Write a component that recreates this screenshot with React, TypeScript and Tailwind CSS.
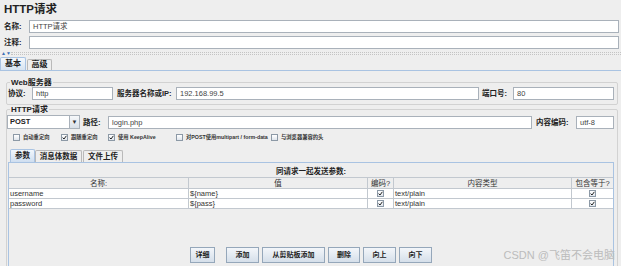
import type { ReactNode } from "react";

const input =
  "h-[13px] border border-[#a9b1ba] bg-white pl-[3px] text-[7.5px] leading-[11px] text-[#444] whitespace-nowrap overflow-hidden";
const label = "text-[7.5px] font-bold leading-[13px] text-[#222] whitespace-nowrap";

function Check({ on }: { on: boolean }) {
  return (
    <span className="flex h-[7px] w-[7px] shrink-0 items-center justify-center border border-[#8c99a6] bg-gradient-to-b from-white to-[#dfe5ec]">
      {on && (
        <svg width="5" height="5" viewBox="0 0 5 5">
          <path d="M0.6 2.6 L2 4 L4.4 0.8" fill="none" stroke="#222" strokeWidth="1" />
        </svg>
      )}
    </span>
  );
}

function Opt({ on, text, w }: { on: boolean; text: string; w: string }) {
  return (
    <div className={`flex items-center gap-[3px] ${w}`}>
      <Check on={on} />
      <span className="text-[5.3px] font-bold leading-[7px] text-[#333] whitespace-nowrap">{text}</span>
    </div>
  );
}

function Group({ title, children, className = "" }: { title: string; children: ReactNode; className?: string }) {
  return (
    <fieldset className={`ml-[6px] mr-[3px] rounded-[2px] border border-[#d2d2d2] ${className}`}>
      <legend className="ml-[3px] px-[1px] text-[8px] font-bold leading-[9px] text-[#222]">{title}</legend>
      {children}
    </fieldset>
  );
}

const rows = [
  { name: "username", value: "${name}" },
  { name: "password", value: "${pass}" },
];

const buttons = ["添加", "从剪贴板添加", "删除", "向上", "向下"];

export default function App() {
  return (
    <div className="relative h-[266px] w-[621px] overflow-hidden bg-[#eeeeee] font-[family-name:'Liberation_Sans','Noto_Sans_CJK_SC',sans-serif]">
      {/* header */}
      <div className="h-[20px] pl-[4px] pt-[2px] text-[11.5px] font-bold leading-[14px] text-[#222]">HTTP请求</div>

      <div className="flex h-[13px] items-center pl-[4px] pr-[2px]">
        <span className={`${label} w-[25px]`}>名称:</span>
        <div className={`${input} flex-1`}>HTTP请求</div>
      </div>
      <div className="mt-[3px] flex h-[13px] items-center pl-[4px] pr-[2px]">
        <span className={`${label} w-[25px]`}>注释:</span>
        <div className={`${input} flex-1`} />
      </div>

      {/* splitter */}
      <div className="flex h-[8px] items-center">
        <span className="w-[11px] pl-[1px] text-[5px] leading-[5px] text-[#3b6fb6]">▲▼</span>
        <div className="h-[3px] flex-1 border-y border-dotted border-[#c4c4c4]" />
      </div>

      {/* main tabs */}
      <div className="flex h-[14px] items-end border-b border-[#a9c3e2]">
        <div className="flex h-[13px] w-[26px] items-center justify-center rounded-t-[2px] border border-b-0 border-[#a9c3e2] bg-gradient-to-b from-[#f4f8fc] to-[#d6e3f1] text-[8px] font-bold text-[#222]">
          基本
        </div>
        <div className="ml-[1px] flex h-[11px] w-[25px] items-center justify-center rounded-t-[2px] border border-b-0 border-[#b9b9b9] bg-[#eeeeee] text-[8px] font-bold text-[#222]">
          高级
        </div>
      </div>

      <div className="mt-[7px]">
        <Group title="Web服务器" className="pb-[4px]">
          <div className="flex h-[13px] items-center pl-[1px] pr-[3px]">
            <span className={`${label} w-[24px]`}>协议:</span>
            <div className={`${input} w-[81px]`}>http</div>
            <span className={`${label} w-[63px] pl-[4px]`}>服务器名称或IP:</span>
            <div className={`${input} flex-1`}>192.168.99.5</div>
            <span className={`${label} w-[34px] pl-[3px]`}>端口号:</span>
            <div className={`${input} w-[101px]`}>80</div>
          </div>
        </Group>

        <Group title="HTTP请求">
          <div className="mt-[1px] flex h-[14px] items-center pr-[3px]">
            <div className="flex h-[14px] w-[73px] border border-[#a9b1ba] bg-white">
              <span className="flex-1 pl-[2px] text-[7.5px] font-bold leading-[12px] text-[#222]">POST</span>
              <span className="flex w-[10px] items-center justify-center border-l border-[#a9b1ba] bg-gradient-to-b from-[#f6f8fa] to-[#d9e0e8] text-[6px] text-[#333]">
                ▼
              </span>
            </div>
            <span className={`${label} w-[28px] pl-[3px]`}>路径:</span>
            <div className={`${input} flex-1`}>login.php</div>
            <span className={`${label} w-[44px] pl-[4px]`}>内容编码:</span>
            <div className={`${input} w-[38px]`}>utf-8</div>
          </div>

          <div className="mt-[5px] flex h-[7px] items-center pl-[6px]">
            <Opt on={false} text="自动重定向" w="w-[48px]" />
            <Opt on={true} text="跟随重定向" w="w-[47px]" />
            <Opt on={true} text="使用 KeepAlive" w="w-[68px]" />
            <Opt on={false} text="对POST使用multipart / form-data" w="w-[95px]" />
            <Opt on={false} text="与浏览器兼容的头" w="w-[80px]" />
          </div>

          {/* inner tabs */}
          <div className="mt-[8px] flex h-[13px] items-end pl-[3px]">
            <div className="flex h-[13px] w-[25px] items-center justify-center rounded-t-[2px] border border-b-0 border-[#a9c3e2] bg-gradient-to-b from-[#f2f7fc] to-[#cfdef0] text-[7.5px] font-bold text-[#222]">
              参数
            </div>
            <div className="flex h-[12px] w-[47px] items-center justify-center rounded-t-[2px] border border-b-0 border-[#b9b9b9] text-[7.5px] font-bold text-[#222]">
              消息体数据
            </div>
            <div className="ml-[1px] flex h-[12px] w-[40px] items-center justify-center rounded-t-[2px] border border-b-0 border-[#b9b9b9] text-[7.5px] font-bold text-[#222]">
              文件上传
            </div>
          </div>

          <div className="ml-[1px] mr-[3px] h-[120px] border border-[#a9c3e2] border-b-0">
            <div className="pt-[3px] text-center text-[7.5px] font-bold leading-[11px] text-[#222]">同请求一起发送参数:</div>
            <div className="grid grid-cols-[179px_179px_26px_178px_1fr] text-[7.5px] leading-[9px] text-[#333]">
              {["名称:", "值", "编码?", "内容类型", "包含等于?"].map((h, i) => (
                <div
                  key={h}
                  className={`flex h-[12px] items-center justify-center border-y border-[#c2c8cf] bg-[#eeeeee] ${i > 0 ? "border-l" : ""}`}
                >
                  {h}
                </div>
              ))}
              {rows.map((r) => (
                <div key={r.name} className="contents">
                  <div className="h-[10px] border-b border-[#c2c8cf] bg-white pl-[1px]">{r.name}</div>
                  <div className="h-[10px] border-b border-l border-[#c2c8cf] bg-white pl-[1px]">{r.value}</div>
                  <div className="flex h-[10px] items-center justify-center border-b border-l border-[#c2c8cf] bg-white">
                    <Check on={true} />
                  </div>
                  <div className="h-[10px] border-b border-l border-[#c2c8cf] bg-white pl-[1px]">text/plain</div>
                  <div className="flex h-[10px] items-center justify-center border-b border-l border-[#c2c8cf] bg-white">
                    <Check on={true} />
                  </div>
                </div>
              ))}
            </div>

            <div className="mt-[38px] flex justify-center">
              <button className="h-[16px] w-[25px] border border-[#95a7ba] bg-gradient-to-b from-[#f3f6fa] to-[#d5dfea] text-[7px] font-bold text-[#222]">
                详细
              </button>
              <div className="ml-[11px] flex gap-[3px]">
                {buttons.map((b) => (
                  <button
                    key={b}
                    className={`h-[16px] border border-[#95a7ba] bg-gradient-to-b from-[#f3f6fa] to-[#d5dfea] text-[7px] font-bold text-[#222] ${
                      b === "从剪贴板添加" ? "w-[63px]" : b === "删除" ? "w-[32px]" : "w-[33px]"
                    }`}
                  >
                    {b}
                  </button>
                ))}
              </div>
            </div>
          </div>
        </Group>
      </div>

      {/* watermark */}
      <div className="absolute bottom-[5px] right-[6px] text-[11px] leading-[12px] text-[#bcbcbc]">CSDN @飞笛不会电脑</div>
    </div>
  );
}
